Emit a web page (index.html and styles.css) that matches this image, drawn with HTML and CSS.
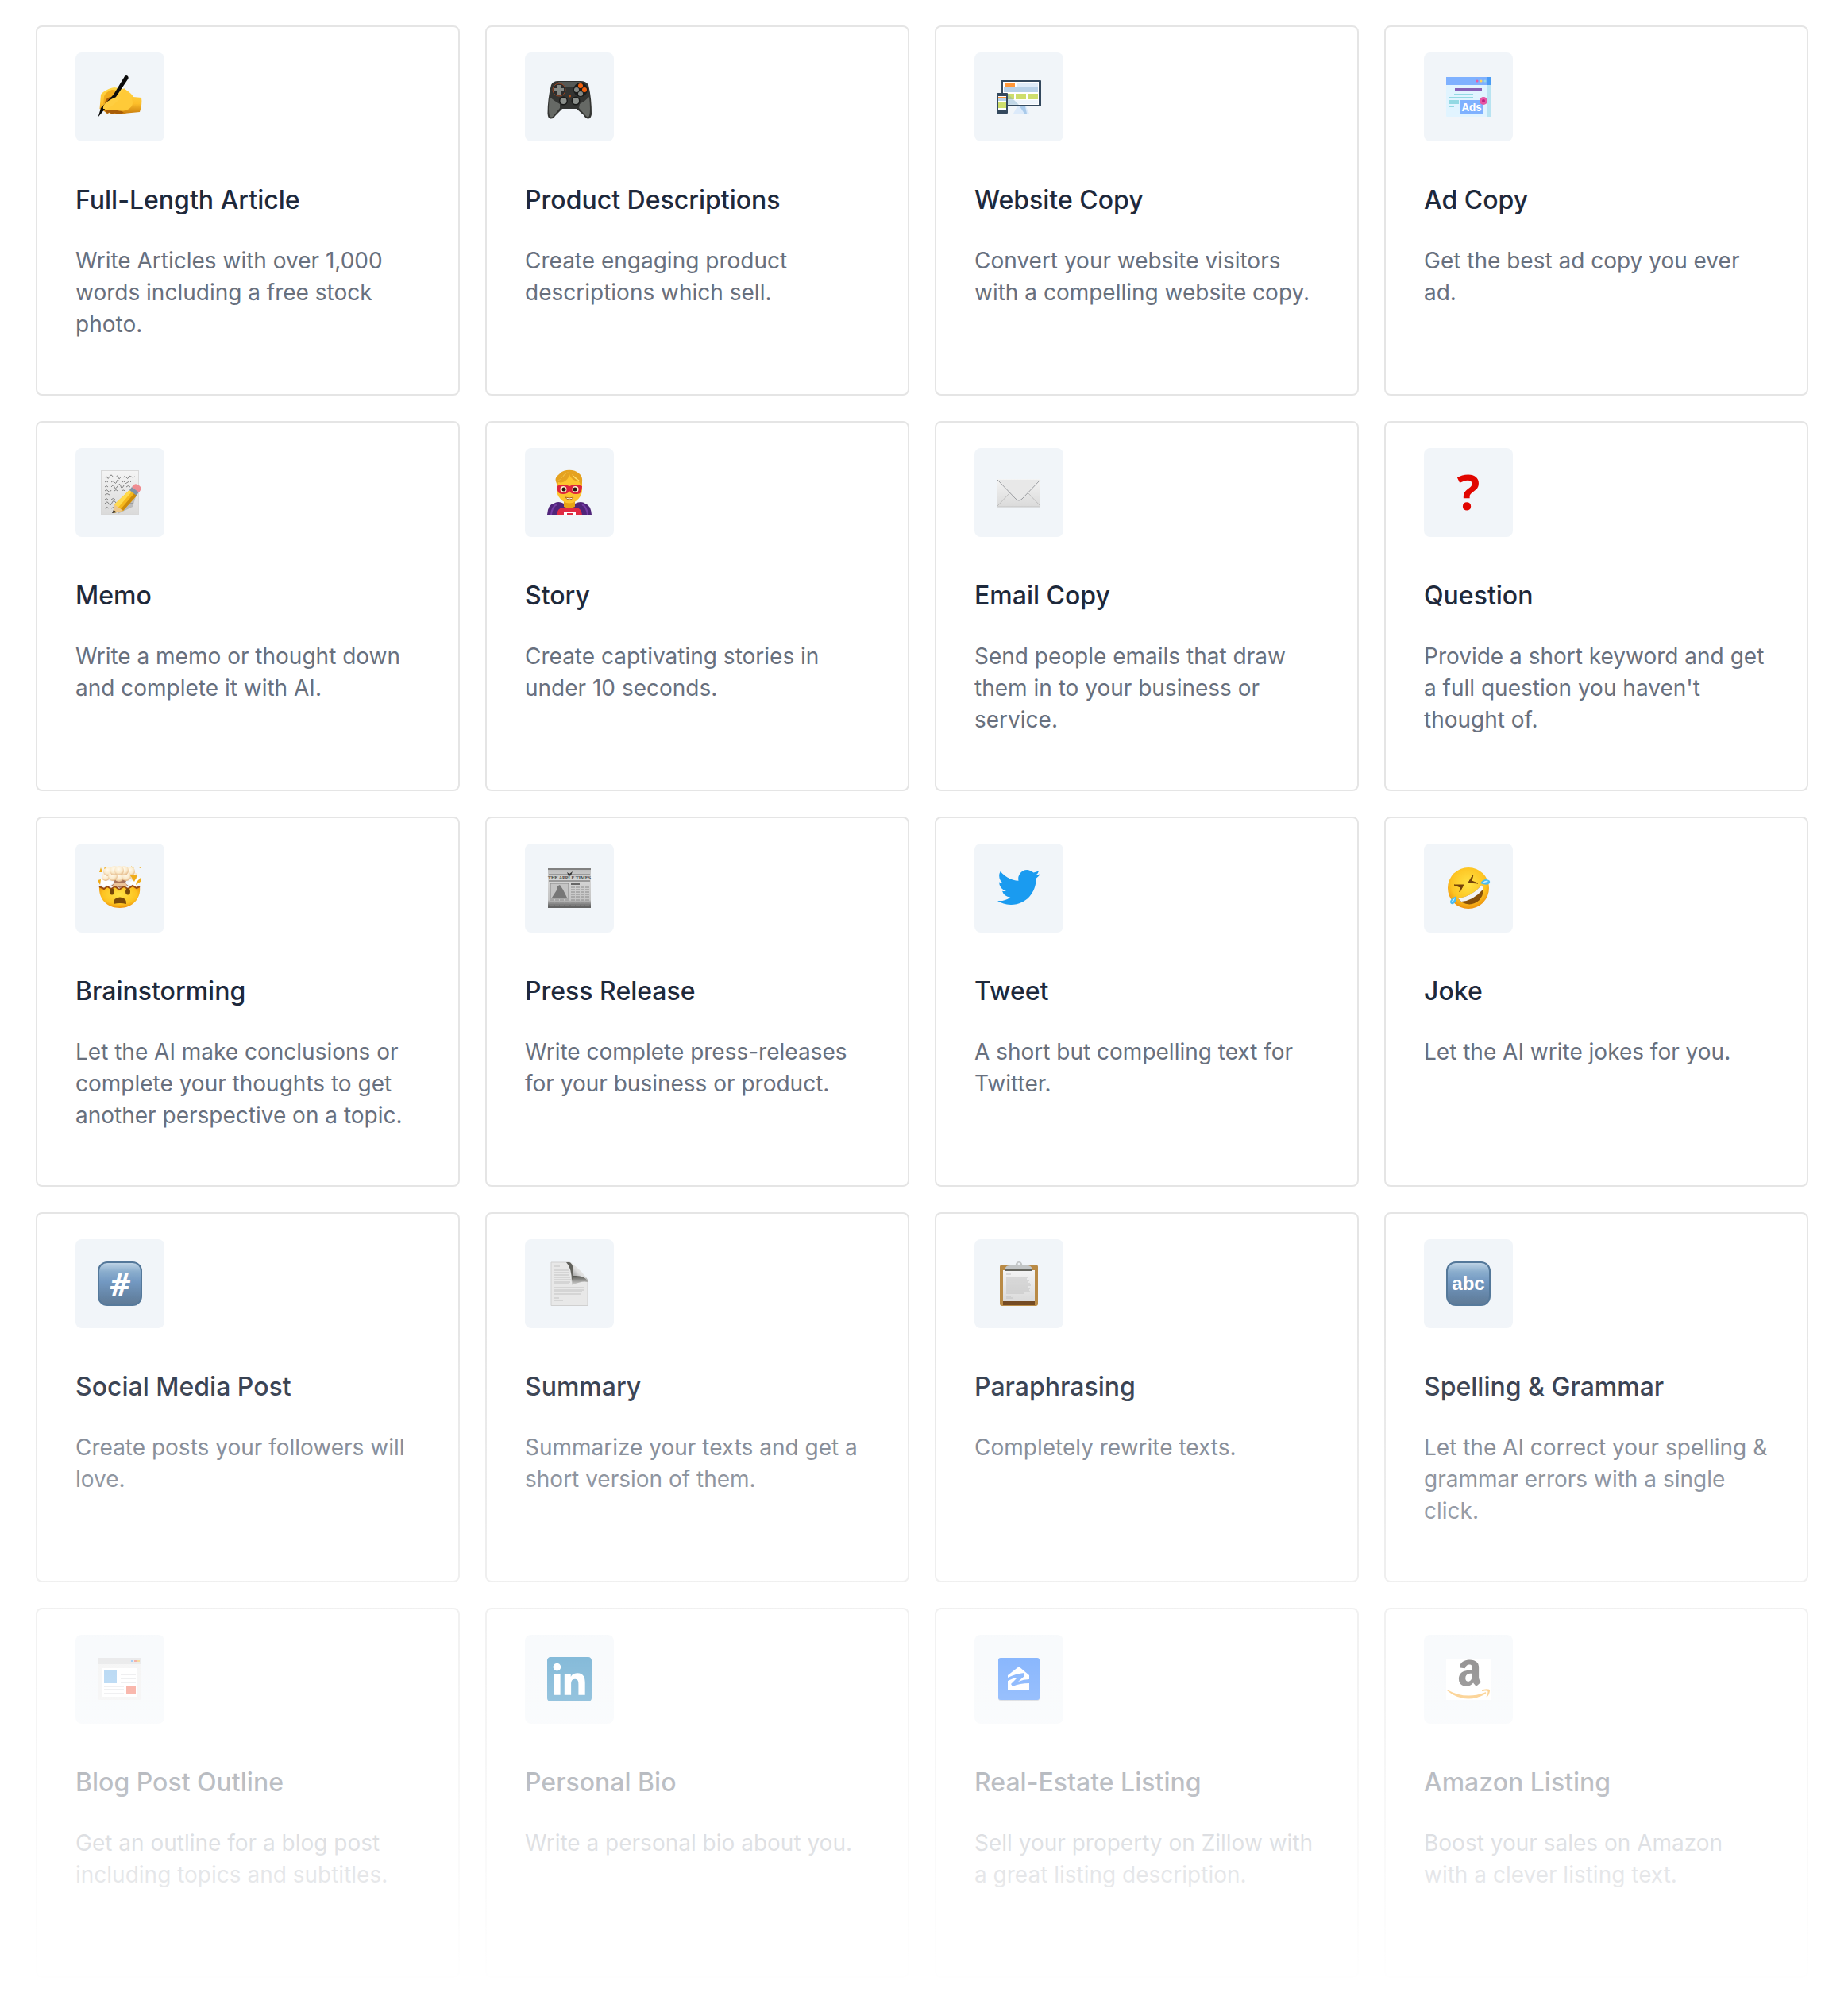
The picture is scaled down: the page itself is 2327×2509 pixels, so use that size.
FILE: index.html
```html
<!DOCTYPE html>
<html lang="en">
<head>
<meta charset="utf-8">
<meta name="viewport" content="width=device-width, initial-scale=1">
<title>Templates</title>
<link rel="stylesheet" href="styles.css">
</head>
<body>
<main class="templates">
<ul class="grid">

<li class="card">
<div class="tile"><svg class="icon" viewBox="0 0 56 56" aria-hidden="true">
<defs>
<linearGradient id="skin" x1="0" y1="0" x2="0" y2="1"><stop offset="0" stop-color="#ffd84a"/><stop offset=".6" stop-color="#fdbf2a"/><stop offset="1" stop-color="#c77a0c"/></linearGradient>
<radialGradient id="face" cx=".5" cy=".4" r=".6"><stop offset="0" stop-color="#ffe346"/><stop offset=".7" stop-color="#fdc321"/><stop offset="1" stop-color="#ee920d"/></radialGradient>
<linearGradient id="key" x1="0" y1="0" x2="0" y2="1"><stop offset="0" stop-color="#c2d6e7"/><stop offset=".22" stop-color="#8aadcd"/><stop offset=".45" stop-color="#7399c2"/><stop offset="1" stop-color="#5c7894"/></linearGradient>
<linearGradient id="paper" x1="0" y1="0" x2="0" y2="1"><stop offset="0" stop-color="#f4f4f4"/><stop offset="1" stop-color="#dadada"/></linearGradient>
</defs>
<path d="M21 16C14 17 7 21 4 25L2.500 43L8 46L12 49L15 48L18 50L22 49L28 50L37 48.500L53 47C55 41 56 34 55 29L45 28C42 23 37 19 32 18Z" fill="url(#skin)"/>
<path d="M9 45L12 49L15 47L18 50L21 48L26 50L33 48C28 44 20 41 13 40Z" fill="#a85c08"/>
<path d="M18 19C12 21 9 24 8 28L7 38C11 34 15 30 19 28L25 20Z" fill="#f0ab1c"/>
<path d="M10 32C13 28 17 27 21 29C14 32 12 37 8 41Z" fill="#a85c08"/>
<path d="M33 17C39 22 44 28 44 36C43 44 33 47 25 45C17 44 10 46 7 42C6 38 11 34 17 31L26 27Z" fill="#ffca38"/>
<path d="M34 2Q36 0 38 2Q39 3 38.500 5L23 28Q21 32 16 34L10 42L.5 53.500L4 42L20 25Z" fill="#0b0b0b"/>
<path d="M7 43C6 38 11 34 17 31C22 28 27 27 30 29C24 34 17 41 12 43Z" fill="#ffce40"/>
</svg></div>
<h2 class="title">Full-Length Article</h2>
<p class="text">Write Articles with over 1,000 words including a free stock photo.</p>
</li>

<li class="card">
<div class="tile"><svg class="icon" viewBox="0 0 56 56" aria-hidden="true">
<path d="M5 13Q7 8 14 8H42Q49 8 52 13C55 25 56 38 56 50Q55 56 51 55.500Q48 55 46 51L37 43H19L10 52Q8 56 4 55.500Q1 55 .5 49C.5 37 2 24 5 13Z" fill="#333432"/>
<path d="M3 28Q10 34 16 37L16 42L8 52Q5 55 3 52Q1 46 3 28ZM53 28Q47 34 41 37L40 42L48 51Q51 55 53 52Q55 46 53 28Z" fill="#666965"/>
<path d="M14 9H42L38 16H18Z" fill="#565956"/>
<circle cx="15" cy="19" r="8" fill="#2c2c2c" stroke="#964522"/>
<path d="M13 13H17V17H21V21H17V25H13V21H9V17H13Z" fill="#858985"/>
<circle cx="42" cy="19" r="9" fill="#1c1d1c"/>
<circle cx="42" cy="14" r="3" fill="#f2600d"/><circle cx="47" cy="19" r="3" fill="#f2600d"/>
<circle cx="42" cy="24" r="3" fill="#858985"/><circle cx="37" cy="19" r="3" fill="#858985"/>
<circle cx="28.500" cy="27" r="1.500" fill="#b65119"/>
<circle cx="20.500" cy="33" r="5.500" fill="#191a19"/><circle cx="36" cy="33" r="5.500" fill="#191a19"/>
<circle cx="20.500" cy="33" r="4" fill="#8b8f8b"/><circle cx="36" cy="33" r="4" fill="#8b8f8b"/>
</svg></div>
<h2 class="title">Product Descriptions</h2>
<p class="text">Create engaging product descriptions which sell.</p>
</li>

<li class="card">
<div class="tile"><svg class="icon" viewBox="0 0 56 56" aria-hidden="true">
<path d="M26 40H37L41 49H21Z" fill="#dceafa"/><path d="M29 40H36L38 49H35Z" fill="#a9caea"/>
<rect x="5" y="7" width="51" height="33" rx="1" fill="#34495e"/>
<rect x="8" y="9" width="45" height="29" fill="#fff"/>
<rect x="10" y="11" width="13" height="4" fill="#ff9637"/><rect x="25" y="11" width="27" height="4" fill="#deebf8"/>
<rect x="9" y="16" width="43" height="6" fill="#b8d1e8"/>
<rect x="10" y="24" width="12" height="7" fill="#cede6c"/><rect x="24" y="24" width="13" height="7" fill="#cede6c"/><rect x="39" y="24" width="13" height="7" fill="#cede6c"/>
<path d="M14 33H52M14 36H52" stroke="#deebf8"/>
<path d="M14 24L28 38H14Z" fill="#7fa9c8" opacity=".4"/>
<rect x="0" y="23" width="14" height="26" rx="1" fill="#34495e"/>
<rect x="2" y="27" width="10" height="18" fill="#fff"/>
<rect x="2" y="28" width="10" height="2" fill="#ff9637"/><rect x="2" y="30" width="10" height="3" fill="#b8d1e8"/><rect x="2" y="34" width="10" height="8" fill="#cede6c"/>
</svg></div>
<h2 class="title">Website Copy</h2>
<p class="text">Convert your website visitors with a compelling website copy.</p>
</li>

<li class="card">
<div class="tile"><svg class="icon" viewBox="0 0 56 56" aria-hidden="true">
<rect x="0" y="3" width="56" height="50" rx="1" fill="#e1f4ff"/>
<rect x="52" y="3" width="4" height="50" fill="#b8e3f1"/>
<path d="M0 3H52V13H0Z" fill="#7fb1ff"/><path d="M52 3H56V13H52Z" fill="#4a9cf5"/>
<circle cx="39" cy="8" r="1.500" fill="#e85aa4"/><circle cx="44" cy="8" r="1.500" fill="#ffd45e"/><circle cx="49" cy="8" r="1.500" fill="#96dbe5"/>
<rect x="11" y="17" width="34" height="3" fill="#8661b8"/>
<path d="M10 25H34M3 29H34M3 33H16M3 36H16M3 40H10" stroke="#93d9e3" stroke-width="2"/>
<rect x="18" y="32" width="29" height="17" fill="#7fb1ff"/>
<circle cx="47" cy="33" r="5" fill="#e557a4"/><circle cx="47" cy="33" r="2" fill="#bf2081"/>
<text x="32" y="46" class="glyph ads" fill="#fff">Ads</text>
</svg></div>
<h2 class="title">Ad Copy</h2>
<p class="text">Get the best ad copy you ever ad.</p>
</li>

<li class="card">
<div class="tile"><svg class="icon" viewBox="0 0 56 56" aria-hidden="true">
<rect x="4.500" y=".5" width="47" height="55" fill="url(#paper)" stroke="#d8d8d8"/>
<path d="M9 9q2-3 3 0t3-1t4 0M23 9q2-4 3 0t3-1M32 9q2-3 4 0t3 0t3-1t5 0M9 15q2-3 4 0M17 15q2-3 4 0t3-1t3 0M31 15q2-3 3 0t4 0t4 0M9 21q2-3 4 0M17 21q3-4 4 0t4-1t4 0t4-1M36 21q2-3 5 0M9 26q2-3 4 0t4-1M21 26q2-3 4 0M30 26q2-2 5 0M9 31q3-3 6 0M9 37q2-3 4 0M17 37q2-3 5 0M9 42q3-4 5 0t4-1t5 0M9 48q3-3 5 0M17 48q3-3 6 0M39 42h5" fill="none" stroke="#555" stroke-width=".7"/>
<path d="M25 54L50 27L44 46L25 55Z" fill="#777" opacity=".35"/>
<path d="M40 25L50 31L32 51L20 54L21 43Z" fill="#f5b81d"/>
<path d="M40 25L43 27L24 49L21 43Z" fill="#ffda4c"/><path d="M46 29L50 31L32 51L29 49Z" fill="#cc8b0d"/>
<path d="M21 43L32 51L19 54Z" fill="#edc88b"/><path d="M20 50L24 53L18 54Z" fill="#28251f"/>
<path d="M40 25L43 21L52 27L49 32Z" fill="#8294a6"/>
<path d="M43 21L46 18Q48 16 52 19Q56 22 54 25L52 28Z" fill="#ef8c91"/>
</svg></div>
<h2 class="title">Memo</h2>
<p class="text">Write a memo or thought down and complete it with AI.</p>
</li>

<li class="card">
<div class="tile"><svg class="icon" viewBox="0 0 56 56" aria-hidden="true">
<path d="M0 56Q1 43 8 42Q14 38 21 42H35Q43 38 48 42Q55 44 56 56Z" fill="#50257a"/>
<path d="M5 56Q6 46 12 43M51 56Q50 46 44 43" fill="none" stroke="#753ca5" stroke-width="2"/>
<path d="M12 56Q13 48 19 47Q28 49 37 47Q43 48 44 56Z" fill="#e02a43"/>
<path d="M21 56V52H36V56H32V54H25V56Z" fill="#fff"/>
<path d="M21 38H35V46Q28 49 21 46Z" fill="#e8a316"/>
<path d="M12 14Q12 2 28 1Q44 2 44 16V26Q43 34 36 39Q28 44 20 39Q13 34 12 26Z" fill="#fdc42e"/>
<path d="M11 14C9 8 15 6 16 4C22-2 35-1 40 4C46 8 44 16 43 20L40 14C35 14 29 10 28 5C27 12 20 17 14 15L13 20Z" fill="#e5a220"/>
<path d="M13 13C19 13 19 4 28 2C21 4 20 11 13 13ZM31 5C34 11 39 13 42 14" fill="#ffe06c"/>
<path d="M12 20Q20 16 28 20Q36 16 44 20Q44 31 36 30Q30 30 28 26Q26 30 20 30Q12 30 12 20Z" fill="#dc243e"/>
<ellipse cx="20.500" cy="24" rx="4" ry="4" fill="#fff3cf"/><ellipse cx="35.500" cy="24" rx="4" ry="4" fill="#fff3cf"/>
<circle cx="21" cy="24" r="2.500" fill="#2a170e"/><circle cx="35" cy="24" r="2.500" fill="#2a170e"/>
<path d="M23 34Q28 36 33 34Q32 37 28 37Q24 37 23 34Z" fill="#fff" stroke="#b36a10"/>
</svg></div>
<h2 class="title">Story</h2>
<p class="text">Create captivating stories in under 10 seconds.</p>
</li>

<li class="card">
<div class="tile"><svg class="icon" viewBox="0 0 56 56" aria-hidden="true">
<rect x="1" y="11" width="54" height="35" rx="1" fill="url(#paper)"/>
<path d="M1 45L17 28M55 45L39 28" stroke="#bdbdbd" fill="none"/>
<path d="M1 46H55" stroke="#c5c5c5"/>
<path d="M1 12L24 36Q28 40 32 36L55 12" fill="#e8e8e8" stroke="#9a9ca0"/>
</svg></div>
<h2 class="title">Email Copy</h2>
<p class="text">Send people emails that draw them in to your business or service.</p>
</li>

<li class="card">
<div class="tile"><svg class="icon" viewBox="0 0 56 56" aria-hidden="true">
<text x="28" y="50" class="glyph question" fill="#e10600">?</text>
</svg></div>
<h2 class="title">Question</h2>
<p class="text">Provide a short keyword and get a full question you haven't thought of.</p>
</li>

<li class="card">
<div class="tile"><svg class="icon" viewBox="0 0 56 56" aria-hidden="true">
<radialGradient id="puff" cx=".45" cy=".35" r=".65"><stop offset="0" stop-color="#fffaf0"/><stop offset=".6" stop-color="#faeacb"/><stop offset="1" stop-color="#e3b685"/></radialGradient>
<path d="M4 16L8 18L20 20L13 27L4 24ZM51 14L54 20L48 26L38 22Z" fill="#fff"/>
<path d="M2 26L8 29L12 26L17 29L22 26L27 30L33 26L38 29L44 25L49 28L53 26C55 42 43 53 28 53C12 53 1 42 2 26Z" fill="url(#face)"/>
<path d="M2 26L8 29L12 26L17 29L22 26L27 30L33 26L38 29L44 25L49 28L53 26" fill="none" stroke="#9a4c12" stroke-width="2"/>
<path d="M19 17H37L35 21Q36 24 41 26L34 25L28 28L21 25L15 26Q21 23 21 20Z" fill="#a8755c"/>
<path d="M21 21H35L37 25H19Z" fill="#ecc49a"/>
<g fill="url(#puff)"><circle cx="10" cy="14" r="5"/><circle cx="45" cy="13" r="5"/><circle cx="27" cy="14" r="6"/><circle cx="13" cy="7" r="6"/><circle cx="41" cy="7" r="6"/><circle cx="19" cy="13" r="6"/><circle cx="36" cy="13" r="6"/><circle cx="21" cy="6" r="6"/><circle cx="33" cy="6" r="6"/><circle cx="27" cy="6" r="6"/></g>
<path d="M2 8L4 2L6 8ZM8 3L11 0L9 4ZM0 18L4 17L3 24ZM41 12L50 12L46 20ZM49 20L55 14L54 20L48 24ZM43 2L42 0L46 3ZM52 2L54 1L54 3Z" fill="#f0ac18"/>
<ellipse cx="18" cy="32.500" rx="3" ry="4" fill="#76480a"/><ellipse cx="38" cy="32.500" rx="3" ry="4" fill="#76480a"/>
<path d="M20 48Q19 40 28 39.500Q37 40 36 48Q28 46 20 48Z" fill="#7b4a09"/>
</svg></div>
<h2 class="title">Brainstorming</h2>
<p class="text">Let the AI make conclusions or complete your thoughts to get another perspective on a topic.</p>
</li>

<li class="card">
<div class="tile"><svg class="icon" viewBox="0 0 56 56" aria-hidden="true">
<linearGradient id="news" x1="0" y1="0" x2="0" y2="1"><stop offset="0" stop-color="#b9b9b9"/><stop offset=".3" stop-color="#d5d5d5"/><stop offset=".8" stop-color="#c4c4c4"/><stop offset=".95" stop-color="#646464"/></linearGradient>
<rect x="1" y="3" width="54" height="50" fill="url(#news)"/>
<path d="M1 4H55" stroke="#808080" stroke-width="2"/><path d="M2 11H54M2 19H54" stroke="#999" stroke-width="2"/>
<path d="M25 8L28 10L32 7L30 12L27 13Z" fill="#333"/>
<text x="28" y="17" class="glyph masthead" fill="#444">THE APPLE TIMES</text>
<rect x="4" y="22" width="23" height="19" fill="#c4c4c4" stroke="#888"/>
<path d="M6 40L13 29L12 26L16 24L20 30L25 40Z" fill="#777"/>
<path d="M30 23H41" stroke="#666" stroke-width="2"/>
<path d="M30 27H53M30 30H53M30 33H53M30 36H53M30 39H53M4 43H27M30 43H53M4 46H27M30 46H53M4 50H27M30 50H53" stroke="#8a8a8a" stroke-dasharray="5 1"/>
</svg></div>
<h2 class="title">Press Release</h2>
<p class="text">Write complete press-releases for your business or product.</p>
</li>

<li class="card">
<div class="tile"><svg class="icon" viewBox="0 0 56 56" aria-hidden="true">
<path transform="translate(1 0) scale(2.250)" fill="#1a9bf0" d="M23.953 4.570a10 10 0 01-2.825.775 4.958 4.958 0 002.163-2.723c-.951.555-2.005.959-3.127 1.184a4.920 4.920 0 00-8.384 4.482C7.690 8.095 4.067 6.130 1.640 3.162a4.822 4.822 0 00-.666 2.475c0 1.710.870 3.213 2.188 4.096a4.904 4.904 0 01-2.228-.616v.060a4.923 4.923 0 003.946 4.827 4.996 4.996 0 01-2.212.085 4.936 4.936 0 004.604 3.417 9.867 9.867 0 01-6.102 2.105c-.390 0-.779-.023-1.170-.067a13.995 13.995 0 007.557 2.209c9.053 0 13.998-7.496 13.998-13.985 0-.210 0-.420-.015-.630A9.935 9.935 0 0024 4.590z"/>
</svg></div>
<h2 class="title">Tweet</h2>
<p class="text">A short but compelling text for Twitter.</p>
</li>

<li class="card">
<div class="tile"><svg class="icon" viewBox="0 0 56 56" aria-hidden="true">
<circle cx="28" cy="28" r="26" fill="url(#face)"/>
<path d="M10 24L22 24L17 33L18 27Z M34 11L32 19L40 22L28 21Z" fill="#74430a" stroke="#74430a" stroke-linejoin="round"/>
<path d="M15 41Q32 39 45 24Q50 33 42 43Q32 52 20 46Q17 44 15 41Z" fill="#88500a"/>
<path d="M15 41Q32 39 45 24L47 29Q34 44 19 45Z" fill="#f4f4f4"/>
<path d="M43 22Q46 17 51 17Q56 18 55 21Q53 26 43 22Z" fill="#4bbcf2"/><path d="M46 21Q49 18 53 19Q51 21 46 21Z" fill="#c9efff"/>
<path d="M13 38Q5 41 5 46Q6 49 9 48Q14 45 13 38Z" fill="#4bbcf2"/><path d="M11 41Q7 43 7 46Q10 44 11 41Z" fill="#c9efff"/>
</svg></div>
<h2 class="title">Joke</h2>
<p class="text">Let the AI write jokes for you.</p>
</li>

<li class="card">
<div class="tile"><svg class="icon" viewBox="0 0 56 56" aria-hidden="true">
<rect x="1" y="1" width="54" height="54" rx="11" fill="url(#key)" stroke="#54789a" stroke-width="2"/>
<text x="28" y="43" class="glyph hash" fill="#fff">#</text>
</svg></div>
<h2 class="title">Social Media Post</h2>
<p class="text">Create posts your followers will love.</p>
</li>

<li class="card">
<div class="tile"><svg class="icon" viewBox="0 0 56 56" aria-hidden="true">
<linearGradient id="curl" x1="0" y1="1" x2="1" y2="0"><stop offset=".1" stop-color="#888"/><stop offset=".45" stop-color="#ddd"/><stop offset="1" stop-color="#fff"/></linearGradient>
<linearGradient id="shade" x1="0" y1="0" x2="0" y2="1"><stop offset="0" stop-color="#555550"/><stop offset="1" stop-color="#ddd"/></linearGradient>
<path d="M5 1H28Q33 2 33 10V18H45Q51 20 51 26V55.500H5Z" fill="#e8e8e8" stroke="#cfcfcf"/>
<path d="M8 6H16M8 11H27M8 14H28M8 17H28M8 20H29M8 23H30M8 26H29M8 28H27M8 33H46M8 36H46M8 38H44M8 41H43M8 46H15M8 49H20" stroke="#c2c2c2"/>
<path d="M24 1H28Q34 3 33 18L31 26Q31 8 24 1Z" fill="#62625d"/>
<path d="M32 18H45Q51 20 51 26Q44 24 31 30Z" fill="url(#shade)"/>
<path d="M29 1Q34 5 33 18Q46 17 51 24Q46 13 29 1Z" fill="url(#curl)"/>
</svg></div>
<h2 class="title">Summary</h2>
<p class="text">Summarize your texts and get a short version of them.</p>
</li>

<li class="card">
<div class="tile"><svg class="icon" viewBox="0 0 56 56" aria-hidden="true">
<rect x="4" y="4" width="48" height="52" rx="3" fill="#b98a45"/>
<rect x="8" y="50" width="40" height="5" fill="#734922"/>
<rect x="8" y="11" width="40" height="39" fill="url(#paper)"/>
<path d="M11 12V8Q12 5 17 5H21Q24 5 24 3Q25 0 28 0Q31 0 32 3Q32 5 35 5H40Q45 6 45 12Z" fill="#c2c5c6"/>
<path d="M11 11H45" stroke="#66665f" stroke-width="2"/><circle cx="28" cy="3" r="1.500" fill="#edf1f5"/>
<path d="M12 16H18M12 20H39M12 22H38M12 24H41M12 26H40M12 28H42M12 30H43M12 32H40M12 34H42M12 36H41M12 38H42M12 40H35M12 44H18M12 46H21" stroke="#c2c2c2"/>
</svg></div>
<h2 class="title">Paraphrasing</h2>
<p class="text">Completely rewrite texts.</p>
</li>

<li class="card">
<div class="tile"><svg class="icon" viewBox="0 0 56 56" aria-hidden="true">
<rect x="1" y="1" width="54" height="54" rx="11" fill="url(#key)" stroke="#54789a" stroke-width="2"/>
<text x="28" y="36" class="glyph abc" fill="#fff">abc</text>
</svg></div>
<h2 class="title">Spelling &amp; Grammar</h2>
<p class="text">Let the AI correct your spelling &amp; grammar errors with a single click.</p>
</li>

<li class="card">
<div class="tile"><svg class="icon" viewBox="0 0 56 56" aria-hidden="true">
<rect x="1" y="1" width="54" height="53" rx="1" fill="#ebebeb"/><rect x="1" y="1" width="54" height="8" fill="#d5d6d8"/>
<rect x="42" y="4" width="3" height="2" fill="#4a98e8"/><rect x="46" y="4" width="3" height="2" fill="#e8604a"/><rect x="50" y="4" width="3" height="2" fill="#efb53c"/>
<rect x="6" y="14" width="44" height="36" fill="#fff"/>
<rect x="8" y="16" width="16" height="17" fill="#6eb1e8"/>
<path d="M29 22H48M29 27H48M29 32H48M8 37H33M8 41H33M8 46H33" stroke="#dcdde0" stroke-width="2"/>
<rect x="36" y="36" width="12" height="11" fill="#f15b42"/>
</svg></div>
<h2 class="title">Blog Post Outline</h2>
<p class="text">Get an outline for a blog post including topics and subtitles.</p>
</li>

<li class="card">
<div class="tile"><svg class="icon" viewBox="0 0 56 56" aria-hidden="true">
<rect x="4" y="4" width="48" height="48" fill="#fff"/>
<path transform="scale(2.333)" fill="#0271b0" d="M20.447 20.452h-3.554v-5.569c0-1.328-.027-3.037-1.852-3.037-1.853 0-2.136 1.445-2.136 2.939v5.667H9.351V9h3.414v1.561h.046c.477-.9 1.637-1.850 3.370-1.850 3.601 0 4.267 2.370 4.267 5.455v6.286zM5.337 7.433c-1.144 0-2.063-.926-2.063-2.065 0-1.138.920-2.063 2.063-2.063 1.140 0 2.064.925 2.064 2.063 0 1.139-.925 2.065-2.064 2.065zm1.782 13.019H3.555V9h3.564v11.452zM22.225 0H1.771C.792 0 0 .774 0 1.729v20.542C0 23.227.792 24 1.771 24h20.451C23.200 24 24 23.227 24 22.271V1.729C24 .774 23.200 0 22.222 0h.003z"/>
</svg></div>
<h2 class="title">Personal Bio</h2>
<p class="text">Write a personal bio about you.</p>
</li>

<li class="card">
<div class="tile"><svg class="icon" viewBox="0 0 56 56" aria-hidden="true">
<rect x="2" y="2" width="52" height="53" rx="3" fill="#b5b9c0"/>
<rect x="2" y="1" width="52" height="53" rx="3" fill="#0b69fb"/>
<path d="M14 23L28 12L41 23V41H14Z" fill="#fff"/>
<path d="M14 26Q24 21 35 20V24L27 31Q34 28 41 28V33Q29 33 20 37L18 34L26 26Q20 27 14 30Z" fill="#0b69fb"/>
</svg></div>
<h2 class="title">Real-Estate Listing</h2>
<p class="text">Sell your property on Zillow with a great listing description.</p>
</li>

<li class="card">
<div class="tile"><svg class="icon" viewBox="0 0 56 56" aria-hidden="true">
<rect x="0" y="2" width="56" height="52" fill="#fff"/>
<g transform="translate(1 1) scale(2.250)">
<path fill="#221f1f" d="M6.610 11.802c0-1.005.247-1.863.743-2.577.495-.710 1.170-1.250 2.040-1.615.796-.335 1.756-.575 2.912-.720.390-.046 1.033-.103 1.920-.174v-.370c0-.930-.105-1.558-.300-1.875-.302-.430-.780-.650-1.440-.650h-.182c-.480.046-.896.196-1.246.460-.350.270-.575.630-.675 1.096-.060.300-.206.465-.435.510l-2.520-.315c-.248-.060-.372-.180-.372-.390 0-.046.007-.090.022-.150.247-1.290.855-2.250 1.820-2.880.976-.616 2.100-.975 3.390-1.050h.540c1.650 0 2.957.434 3.888 1.290.135.150.270.300.405.480.120.165.224.314.283.450.075.134.150.330.195.570.060.254.105.420.135.510.030.104.062.300.076.615.010.313.020.493.020.553v5.280c0 .376.060.720.165 1.036.105.313.210.540.315.674l.510.674c.090.136.136.256.136.360 0 .120-.060.226-.180.314-1.200 1.050-1.860 1.620-1.963 1.710-.165.135-.375.150-.630.045a6.062 6.062 0 01-.526-.496l-.310-.347a9.391 9.391 0 01-.317-.420l-.300-.435c-.810.886-1.603 1.440-2.400 1.665-.494.150-1.093.227-1.830.227-1.110 0-2.040-.343-2.760-1.034-.720-.690-1.080-1.665-1.080-2.940zm3.703-.438c0 .566.140 1.020.425 1.364.285.340.675.512 1.155.512.045 0 .106-.007.195-.020.090-.016.134-.023.166-.023.614-.160 1.080-.553 1.424-1.178.165-.280.285-.580.360-.910.090-.320.120-.590.135-.800.015-.195.015-.540.015-1.005v-.540c-.840 0-1.484.060-1.920.180-1.275.360-1.920 1.170-1.920 2.430z"/>
<path fill="#f79d13" d="M.045 18.020c.072-.116.187-.124.348-.022 3.636 2.110 7.594 3.166 11.870 3.166 2.852 0 5.668-.533 8.447-1.595l.315-.140c.138-.060.234-.100.293-.130.226-.088.390-.046.525.130.120.174.090.336-.120.480-.256.190-.600.410-1.006.654-1.244.743-2.640 1.316-4.185 1.726a17.617 17.617 0 01-10.951-.577 17.880 17.880 0 01-5.430-3.350c-.100-.074-.151-.150-.151-.220 0-.047.021-.090.051-.130zM19.525 18.391c.030-.060.075-.110.132-.170.362-.243.714-.410 1.050-.500a8.094 8.094 0 011.612-.240c.140-.012.280 0 .410.030.650.060 1.050.168 1.172.330.063.090.099.228.099.390v.150c0 .510-.149 1.110-.424 1.800-.278.690-.664 1.248-1.156 1.680-.073.060-.140.090-.197.090-.030 0-.060 0-.090-.012-.090-.044-.107-.120-.064-.240.540-1.260.806-2.143.806-2.640 0-.150-.030-.270-.087-.344-.145-.166-.550-.257-1.224-.257-.243 0-.533.016-.870.046-.363.045-.700.090-1 .135-.090 0-.148-.014-.180-.044z"/>
</g>
</svg></div>
<h2 class="title">Amazon Listing</h2>
<p class="text">Boost your sales on Amazon with a clever listing text.</p>
</li>

</ul>
</main>
</body>
</html>
```
FILE: styles.css
```css
* {
  box-sizing: border-box;
}

body {
  margin: 0;
  background: #fff;
  font-family: Inter, "Liberation Sans", sans-serif;
}

.templates {
  position: relative;
  padding: 32px 50px 19px 45px;
}

/* Fades the last rows of the list into the page. */
.templates::after {
  content: "";
  position: absolute;
  inset: 65% 0 0;
  background: linear-gradient(to bottom, rgba(255, 255, 255, 0), #fff);
  pointer-events: none;
}

.grid {
  display: grid;
  grid-template-columns: repeat(4, minmax(0, 1fr));
  grid-auto-rows: 1fr;
  gap: 32px;
  margin: 0;
  padding: 0;
  list-style: none;
}

.card {
  padding: 32px 48px 68px;
  border: 2px solid #e5e5e5;
  border-radius: 8px;
}

.tile {
  display: flex;
  align-items: center;
  justify-content: center;
  width: 112px;
  height: 112px;
  border-radius: 8px;
  background: #f1f5f9;
}

.icon {
  display: block;
  width: 56px;
  height: 56px;
  overflow: visible;
}

.title {
  margin: 54px 0 36px;
  color: #1e293b;
  font-size: 32px;
  font-weight: 500;
  line-height: 40px;
}

.text {
  margin: 0;
  color: #68707e;
  font-size: 28px;
  line-height: 40px;
}

.glyph {
  font-family: "Liberation Sans", sans-serif;
  font-weight: 700;
  text-anchor: middle;
}

.ads {
  font-family: Inter, sans-serif;
  font-size: 13px;
}

.question {
  font-family: "Open Sans", sans-serif;
  font-size: 60px;
}

.masthead {
  font-family: "Liberation Serif", serif;
  font-size: 6px;
}

.hash {
  font-family: "Noto Sans", sans-serif;
  font-size: 40px;
  font-style: italic;
}

.abc {
  font-size: 24px;
}
```
